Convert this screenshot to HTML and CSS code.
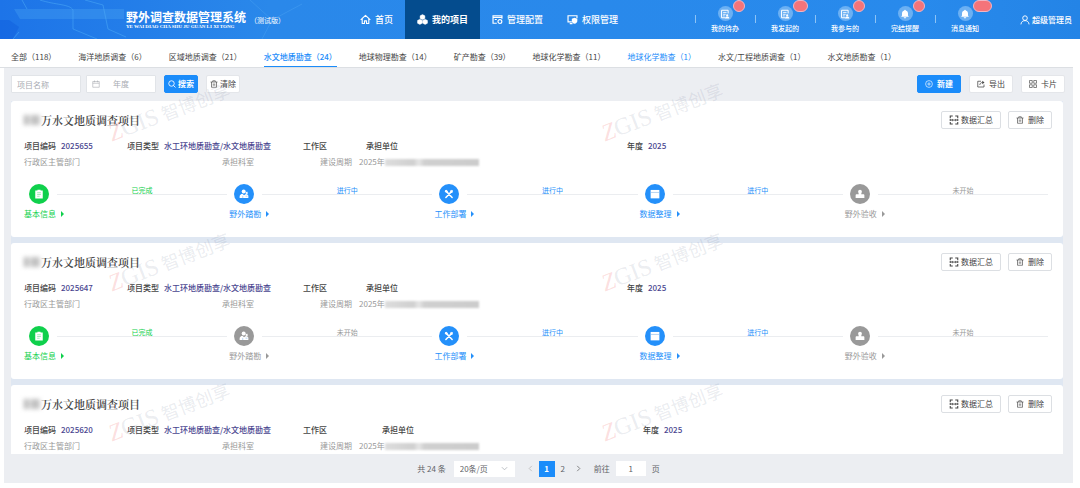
FILE: index.html
```html
<!DOCTYPE html>
<html lang="zh-CN">
<head>
    <meta charset="UTF-8">
    <meta name="viewport" content="width=device-width, initial-scale=1.0">
    <title>野外调查数据管理系统</title>
    <link rel="stylesheet" href="styles.css">
</head>
<body>
    <!-- 图标 -->
    <svg class="sprite" aria-hidden="true">
        <symbol id="i-home" viewBox="0 0 16 16"><path d="M1 8.5 8 2l7 6.5M3.2 7v6.8h3.3V10h3v3.8h3.3V7" fill="none" stroke="currentColor" stroke-width="1.6" stroke-linejoin="round"/></symbol>
        <symbol id="i-cubes" viewBox="0 0 16 16"><path d="M8 .8l3.5 1.8v4L8 8.4 4.5 6.6v-4zM4.2 7.6l3.5 1.8v4L4.2 15.2.7 13.4v-4zM11.8 7.6l3.5 1.8v4l-3.5 1.8-3.5-1.8v-4z" fill="currentColor" stroke="currentColor" stroke-width=".6"/></symbol>
        <symbol id="i-config" viewBox="0 0 16 16"><path d="M7 13.5H1.500v-11h13V7M1.500 5h13" fill="none" stroke="currentColor" stroke-width="1.7"/><circle cx="11.5" cy="11" r="2.8" fill="none" stroke="currentColor" stroke-width="1.7"/><path d="M4 8h3" stroke="currentColor" stroke-width="1.5"/></symbol>
        <symbol id="i-screen" viewBox="0 0 16 16"><path d="M7 11.5H1.500v-9h13V6M4 14h4" fill="none" stroke="currentColor" stroke-width="1.7"/><path d="M11 5.500l4 1.500v3c0 2-1.700 3.300-4 4.300-2.300-1-4-2.300-4-4.300V7z" fill="currentColor"/></symbol>
        <symbol id="i-list" viewBox="0 0 16 16"><path d="M13 7V2H2.500v12H8" fill="none" stroke="currentColor" stroke-width="1.6"/><path d="M5 5.500h5.500M5 8.500h4M5 11h2.500" stroke="currentColor" stroke-width="1.3"/><circle cx="11.5" cy="10" r="1.8" fill="currentColor"/><path d="M8 15c0-4.200 7-4.200 7 0z" fill="currentColor"/></symbol>
        <symbol id="i-bell" viewBox="0 0 16 16"><path d="M8 1c.8 0 1.200.5 1.200 1.200C11.500 2.800 12.800 4.600 12.800 7v3.200l1.400 2H1.800l1.400-2V7c0-2.400 1.300-4.200 3.600-4.800C6.800 1.500 7.200 1 8 1zM6 13h4c0 2.600-4 2.600-4 0z" fill="currentColor"/></symbol>
        <symbol id="i-user" viewBox="0 0 16 16"><circle cx="8" cy="5" r="3.7" fill="none" stroke="currentColor" stroke-width="1.5"/><path d="M1.500 15c.3-4 3-6 6.500-6s6.200 2 6.500 6" fill="none" stroke="currentColor" stroke-width="1.5"/></symbol>
        <symbol id="i-search" viewBox="0 0 16 16"><circle cx="7" cy="7" r="5.500" fill="none" stroke="currentColor" stroke-width="1.7"/><path d="M11 11l4 4" stroke="currentColor" stroke-width="1.7"/></symbol>
        <symbol id="i-trash" viewBox="0 0 16 16"><path d="M1 4h14M5.500 4V1.500h5V4M3 4v10.500h10V4M6.500 7v4.500M9.500 7v4.500" fill="none" stroke="currentColor" stroke-width="1.3"/></symbol>
        <symbol id="i-date" viewBox="0 0 16 16"><path d="M1.500 3h13v11.500h-13zM1.500 6.500h13M5 1v3.500M11 1v3.500" fill="none" stroke="currentColor" stroke-width="1.2"/></symbol>
        <symbol id="i-plus" viewBox="0 0 16 16"><circle cx="8" cy="8" r="6.8" fill="none" stroke="currentColor" stroke-width="1.3"/><path d="M8 4.500v7M4.500 8h7" stroke="currentColor" stroke-width="1.3"/></symbol>
        <symbol id="i-export" viewBox="0 0 16 16"><path d="M8 2.500H1.500V14H14V9" fill="none" stroke="currentColor" stroke-width="1.5"/><path d="M5.500 10c.5-3.500 2.500-5 5.500-5" fill="none" stroke="currentColor" stroke-width="1.5"/><path d="M10.500 1.500 15 5l-4.500 3.500z" fill="currentColor"/></symbol>
        <symbol id="i-grid" viewBox="0 0 16 16"><path d="M1 1h5.500v5.500H1zM9.500 1H15v5.500H9.500zM1 9.500h5.500V15H1zM9.500 9.500H15V15H9.500z" fill="none" stroke="currentColor" stroke-width="1.3"/></symbol>
        <symbol id="i-merge" viewBox="0 0 16 16"><path d="M6 1.500H2V5M2 6.500v3M2 11v3.500h4M10 1.500h4V5M14 6.500v3M14 11v3.500h-4" fill="none" stroke="currentColor" stroke-width="1.7"/><path d="M3 8h3.500M13 8H9.500" stroke="currentColor" stroke-width="1.6"/><path d="M5.500 5.800 8 8l-2.500 2.200zM10.500 5.800 8 8l2.500 2.200z" fill="currentColor"/></symbol>
        <symbol id="i-info" viewBox="0 0 16 16"><path d="M2 2.500h3.500V1h5v1.500H14V15H2z" fill="currentColor"/><path d="M5 6h6M5 8.800h6M5 11.600h4" stroke="#6fdf92" stroke-width="1"/></symbol>
        <symbol id="i-survey" viewBox="0 0 16 16"><circle cx="7.500" cy="4" r="3.2" fill="currentColor"/><path d="M1 14.500V12c0-2.500 2-4 4.500-4.500L8 10l3-2c2.500 0 4 1.500 4 3.500v3z" fill="currentColor"/><path d="M10 6l3-2 1.500 3-3 1z" fill="currentColor"/><path d="M6 11v3.500M10.500 11.500h3" class="cut"/></symbol>
        <symbol id="i-tools" viewBox="0 0 16 16"><path d="M3 3l10 10.500M13 3 3 13.500" stroke="currentColor" stroke-width="2.4" stroke-linecap="round"/><path d="M1 3.500 3.500 1l3 2.500-3 3zM10 2.500 12.500 1 12 3.500l2.500.5L13 6.500l-3-.5z" fill="currentColor"/></symbol>
        <symbol id="i-data" viewBox="0 0 16 16"><path d="M1 1.500h14V15H1z" fill="currentColor"/><path d="M1 5.500h14" class="cut"/></symbol>
        <symbol id="i-stamp" viewBox="0 0 16 16"><path d="M8 1a3 3 0 0 1 3 3c0 1.600-1 2.300-1 4.300h3.500c1 0 1.500.7 1.500 1.700v4.500H1V10c0-1 .5-1.700 1.500-1.700H6C6 6.300 5 5.600 5 4a3 3 0 0 1 3-3z" fill="currentColor"/></symbol>
    </svg>

    <header class="header">
        <svg class="header-art" viewBox="0 0 360 39" preserveAspectRatio="xMinYMid slice" aria-hidden="true">
            <path d="M0 20h9l10 7-6 12H0z" fill="#1262e0" opacity=".6"/>
            <path d="M22 0l5 9M19 32l-6 7M40 0c15 5 30 4 33 10v19l24 10M85 0l18 5 5 24 18 8" fill="none" stroke="#55b4f8" opacity=".45"/>
            <path d="M14 9h110v10H20z" fill="#53adf4" opacity=".3"/>
            <path d="M250 0l22 20-10 19M272 20l30-16" fill="none" stroke="#58b0f5" opacity=".3"/>
        </svg>
        <div class="brand">
            <div class="brand-name">
                <strong>野外调查数据管理系统</strong>
                <span class="pinyin">YE WAI DIAO CHA SHU JU GUAN LI XI TONG</span>
            </div>
            <span class="beta">（测试版）</span>
        </div>
        <nav class="nav">
            <a href="#"><svg><use href="#i-home"/></svg>首页</a>
            <a href="#" class="active"><svg><use href="#i-cubes"/></svg>我的项目</a>
            <a href="#"><svg><use href="#i-config"/></svg>管理配置</a>
            <a href="#"><svg><use href="#i-screen"/></svg>权限管理</a>
        </nav>
        <div class="notices">
            <a href="#"><span class="round"><svg><use href="#i-list"/></svg><i class="badge"></i></span>我的待办</a>
            <a href="#"><span class="round"><svg><use href="#i-list"/></svg><i class="badge mid"></i></span>我发起的</a>
            <a href="#"><span class="round"><svg><use href="#i-list"/></svg><i class="badge"></i></span>我参与的</a>
            <a href="#"><span class="round"><svg><use href="#i-bell"/></svg><i class="badge"></i></span>完结提醒</a>
            <a href="#"><span class="round"><svg><use href="#i-bell"/></svg><i class="badge wide"></i></span>消息通知</a>
        </div>
        <a href="#" class="user"><svg><use href="#i-user"/></svg>超级管理员</a>
    </header>

    <nav class="tabs">
        <a href="#">全部（118）</a>
        <a href="#">海洋地质调查（6）</a>
        <a href="#">区域地质调查（21）</a>
        <a href="#" class="active">水文地质勘查（24）</a>
        <a href="#">地球物理勘查（14）</a>
        <a href="#">矿产勘查（39）</a>
        <a href="#">地球化学勘查（11）</a>
        <a href="#" class="blue">地球化学勘查（1）</a>
        <a href="#">水文/工程地质调查（1）</a>
        <a href="#">水文地质勘查（1）</a>
    </nav>

    <main class="main">
        <form class="toolbar">
            <input type="text" class="field" placeholder="项目名称" aria-label="项目名称">
            <label class="field date"><svg><use href="#i-date"/></svg><input type="text" placeholder="年度" aria-label="年度"></label>
            <button type="button" class="btn primary search"><svg><use href="#i-search"/></svg>搜索</button>
            <button type="button" class="btn clear"><svg><use href="#i-trash"/></svg>清除</button>
            <div class="actions">
                <button type="button" class="btn primary"><svg><use href="#i-plus"/></svg>新建</button>
                <button type="button" class="btn"><svg><use href="#i-export"/></svg>导出</button>
                <button type="button" class="btn"><svg><use href="#i-grid"/></svg>卡片</button>
            </div>
        </form>

        <div class="list">
            <article class="card">
                <div class="card-head">
                    <h2><span class="mask"></span>万水文地质调查项目</h2>
                    <button type="button" class="btn line sum"><svg><use href="#i-merge"/></svg>数据汇总</button>
                    <button type="button" class="btn line"><svg><use href="#i-trash"/></svg>删除</button>
                </div>
                <div class="info">
                    <span>项目编码<b>2025655</b></span>
                    <span>项目类型<b>水工环地质勘查/水文地质勘查</b></span>
                    <span>工作区</span>
                    <span>承担单位</span>
                    <span>年度<b>2025</b></span>
                </div>
                <div class="info sub">
                    <span>行政区主管部门</span>
                    <span>承担科室</span>
                    <span>建设周期</span>
                    <span>2025年<span class="mask long"></span></span>
                </div>
                <div class="steps">
                    <div class="step done">
                        <div class="track"><span class="dot"><svg><use href="#i-info"/></svg></span><span class="state">已完成</span></div>
                        <a href="#">基本信息</a>
                    </div>
                    <div class="step doing">
                        <div class="track"><span class="dot"><svg><use href="#i-survey"/></svg></span><span class="state">进行中</span></div>
                        <a href="#">野外踏勘</a>
                    </div>
                    <div class="step doing">
                        <div class="track"><span class="dot"><svg><use href="#i-tools"/></svg></span><span class="state">进行中</span></div>
                        <a href="#">工作部署</a>
                    </div>
                    <div class="step doing">
                        <div class="track"><span class="dot"><svg><use href="#i-data"/></svg></span><span class="state">进行中</span></div>
                        <a href="#">数据整理</a>
                    </div>
                    <div class="step">
                        <div class="track"><span class="dot"><svg><use href="#i-stamp"/></svg></span><span class="state">未开始</span></div>
                        <a href="#">野外验收</a>
                    </div>
                </div>
            </article>

            <article class="card">
                <div class="card-head">
                    <h2><span class="mask"></span>万水文地质调查项目</h2>
                    <button type="button" class="btn line sum"><svg><use href="#i-merge"/></svg>数据汇总</button>
                    <button type="button" class="btn line"><svg><use href="#i-trash"/></svg>删除</button>
                </div>
                <div class="info">
                    <span>项目编码<b>2025647</b></span>
                    <span>项目类型<b>水工环地质勘查/水文地质勘查</b></span>
                    <span>工作区</span>
                    <span>承担单位</span>
                    <span>年度<b>2025</b></span>
                </div>
                <div class="info sub">
                    <span>行政区主管部门</span>
                    <span>承担科室</span>
                    <span>建设周期</span>
                    <span>2025年<span class="mask long"></span></span>
                </div>
                <div class="steps">
                    <div class="step done">
                        <div class="track"><span class="dot"><svg><use href="#i-info"/></svg></span><span class="state">已完成</span></div>
                        <a href="#">基本信息</a>
                    </div>
                    <div class="step">
                        <div class="track"><span class="dot"><svg><use href="#i-survey"/></svg></span><span class="state">未开始</span></div>
                        <a href="#">野外踏勘</a>
                    </div>
                    <div class="step doing">
                        <div class="track"><span class="dot"><svg><use href="#i-tools"/></svg></span><span class="state">进行中</span></div>
                        <a href="#">工作部署</a>
                    </div>
                    <div class="step doing">
                        <div class="track"><span class="dot"><svg><use href="#i-data"/></svg></span><span class="state">进行中</span></div>
                        <a href="#">数据整理</a>
                    </div>
                    <div class="step">
                        <div class="track"><span class="dot"><svg><use href="#i-stamp"/></svg></span><span class="state">未开始</span></div>
                        <a href="#">野外验收</a>
                    </div>
                </div>
            </article>

            <article class="card">
                <div class="card-head">
                    <h2><span class="mask"></span>万水文地质调查项目</h2>
                    <button type="button" class="btn line sum"><svg><use href="#i-merge"/></svg>数据汇总</button>
                    <button type="button" class="btn line"><svg><use href="#i-trash"/></svg>删除</button>
                </div>
                <div class="info area-wide">
                    <span>项目编码<b>2025620</b></span>
                    <span>项目类型<b>水工环地质勘查/水文地质勘查</b></span>
                    <span>工作区</span>
                    <span>承担单位</span>
                    <span>年度<b>2025</b></span>
                </div>
                <div class="info sub">
                    <span>行政区主管部门</span>
                    <span>承担科室</span>
                    <span>建设周期</span>
                    <span>2025年<span class="mask long"></span></span>
                </div>
            </article>
        </div>

        <div class="pager">
            <span>共 24 条</span>
            <select class="size" aria-label="每页条数"><option>20条/页</option></select>
            <button type="button" class="arrow" disabled aria-label="上一页"><svg viewBox="0 0 8 8"><path d="M5.500 1 2.500 4l3 3"/></svg></button>
            <button type="button" class="page current">1</button>
            <button type="button" class="page">2</button>
            <button type="button" class="arrow" aria-label="下一页"><svg viewBox="0 0 8 8"><path d="M2.500 1l3 3-3 3"/></svg></button>
            <label class="jump">前往<input type="text" value="1">页</label>
        </div>

        <div class="watermarks" aria-hidden="true">
            <div><em><i>Z</i>GIS</em>智博创享</div>
            <div><em><i>Z</i>GIS</em>智博创享</div>
            <div><em><i>Z</i>GIS</em>智博创享</div>
            <div><em><i>Z</i>GIS</em>智博创享</div>
            <div><em><i>Z</i>GIS</em>智博创享</div>
            <div><em><i>Z</i>GIS</em>智博创享</div>
        </div>
    </main>
</body>
</html>
```

FILE: styles.css
```css
* {
    box-sizing: border-box;
}
body {
    margin: 0;
    height: 100vh;
    display: flex;
    flex-direction: column;
    overflow: hidden;
    background: #fff;
    color: #444;
    font-family: "Noto Sans CJK SC", sans-serif;
    font-size: 8px;
    line-height: 12px;
}
a {
    color: inherit;
    text-decoration: none;
}
button, input, select {
    font: inherit;
    color: inherit;
    margin: 0;
}
.sprite {
    position: absolute;
    width: 0;
    height: 0;
}
.cut {
    fill: none;
    stroke: #8cb8e8;
}

/* header */
.header {
    position: relative;
    display: flex;
    height: 39px;
    flex-shrink: 0;
    color: #fff;
    background: linear-gradient(to right, #1d74e8, #2a88ea 25%, #288aec 85%, #2484e6);
}
.header-art {
    position: absolute;
    left: 0;
    top: 0;
    width: 360px;
    height: 39px;
}
.brand {
    position: relative;
    display: flex;
    align-items: center;
    width: 348px;
    padding-left: 126px;
}
.brand-name {
    display: flex;
    flex-direction: column;
    width: 120px;
}
.brand-name strong {
    font-size: 12px;
    line-height: 14px;
}
.pinyin {
    font-family: "Liberation Serif", serif;
    font-size: 5px;
    font-weight: bold;
    line-height: 6px;
    white-space: nowrap;
}
.beta {
    font-size: 7px;
    margin-left: 4px;
}
.nav {
    display: flex;
}
.nav a {
    display: flex;
    align-items: center;
    gap: 4px;
    padding: 0 12px;
    font-size: 9px;
    font-weight: 500;
    white-space: nowrap;
}
.nav svg {
    width: 11px;
    height: 11px;
}
.nav .active {
    background: #044c8e;
    font-weight: bold;
}
.notices {
    display: flex;
    margin-left: auto;
}
.notices a {
    position: relative;
    width: 60px;
    display: flex;
    flex-direction: column;
    align-items: center;
    padding-top: 6px;
    font-size: 7px;
    font-weight: 500;
    line-height: 14px;
}
.notices a::before {
    content: "";
    position: absolute;
    left: 0;
    top: 15px;
    height: 8px;
    border-left: 1px solid #8cc3f6;
}
.round {
    position: relative;
    display: flex;
    align-items: center;
    justify-content: center;
    width: 15px;
    height: 15px;
    border-radius: 50%;
    background: #6bb0f3;
}
.round svg {
    width: 10px;
    height: 10px;
}
.badge {
    position: absolute;
    left: 15px;
    top: -6px;
    width: 12px;
    height: 12px;
    border: 1px solid #f0b6c4;
    border-radius: 6px;
    background: #f4747a;
}
.badge.mid {
    width: 15px;
}
.badge.wide {
    width: 19px;
}
.user {
    display: flex;
    align-items: center;
    gap: 2px;
    margin-left: 25px;
    padding-right: 8px;
    font-weight: 500;
}
.user svg {
    width: 10px;
    height: 10px;
}

/* tabs */
.tabs {
    display: flex;
    gap: 22px;
    flex-shrink: 0;
    height: 29px;
    margin-right: 7px;
    padding: 8px 0 0 11px;
    border-bottom: 1px solid #dcdfe3;
    line-height: 20px;
    white-space: nowrap;
}
.tabs .active {
    color: #1b8cfa;
    font-weight: 500;
    border-bottom: 1px solid #1b8cfa;
}
.tabs .blue {
    color: #1b8cfa;
}

/* content */
.main {
    position: relative;
    flex: 1;
    min-height: 0;
    display: flex;
    flex-direction: column;
    margin: 0 7px 5px 4px;
    overflow: hidden;
    background: #eceef2;
}
.toolbar {
    display: flex;
    gap: 8px;
    padding: 7px 8px 8px 7px;
}
.field {
    width: 70px;
    height: 18px;
    padding: 0 5px;
    border: 1px solid #e1e4e8;
    border-radius: 1px;
    background: #fff;
}
.toolbar .field + .field {
    margin-left: -3px;
}
.date {
    display: flex;
    align-items: center;
    gap: 13px;
    color: #a8abb2;
}
.date svg {
    width: 8px;
    height: 8px;
    flex-shrink: 0;
}
.date input {
    width: 100%;
    min-width: 0;
    padding: 0;
    border: 0;
    background: none;
}
input::placeholder {
    color: #a8abb2;
    opacity: 1;
}
.btn {
    display: flex;
    align-items: center;
    justify-content: center;
    gap: 4px;
    height: 18px;
    padding: 0 7px;
    border: 1px solid #e4e6ea;
    border-radius: 2px;
    background: #fff;
    white-space: nowrap;
}
.btn svg {
    width: 8px;
    height: 8px;
}
.btn.primary {
    border-color: #1b8cfa;
    background: #1b8cfa;
    color: #fff;
    font-weight: bold;
}
.btn.search, .btn.clear {
    gap: 2px;
    padding: 0 3px;
}
.actions {
    display: flex;
    gap: 8px;
    margin-left: auto;
}
.list {
    flex: 1;
    min-height: 0;
    display: flex;
    flex-direction: column;
    gap: 6px;
    margin: 0 10px 0 7px;
    overflow: hidden;
    background: #dfe7f2;
}
.card {
    flex-shrink: 0;
    min-height: 136px;
    padding: 10px 11px 0 13px;
    border-radius: 3px;
    background: #fff;
}
.card-head {
    display: flex;
    align-items: center;
    gap: 7px;
}
.card-head h2 {
    display: flex;
    align-items: center;
    gap: 1px;
    margin: 0 auto 0 0;
    font-family: "Noto Serif CJK SC", "Noto Sans CJK SC", serif;
    font-size: 11px;
    font-weight: 600;
    line-height: 18px;
    color: #444;
}
.btn.line {
    border-color: #dcdfe3;
}
.btn.sum {
    gap: 2px;
}
.btn.sum svg {
    width: 10px;
    height: 10px;
}
.mask {
    display: inline-block;
    width: 16px;
    height: 10px;
    background: linear-gradient(to right, #aaa, #ddd 35%, #bbb 65%, #ccc);
    filter: blur(2px);
}
.mask.long {
    width: 94px;
    height: 7px;
    background: linear-gradient(to right, #ddd, #d0d0d0 30%, #e6e6e6 36%, #d0d0d0 42%, #ccc 95%);
    filter: blur(1px);
    vertical-align: -1px;
}
.info {
    display: grid;
    grid-template-columns: 103px 176px 63px 261px 1fr;
    margin-top: 11px;
    font-weight: 500;
    white-space: nowrap;
}
.info.area-wide {
    grid-template-columns: 103px 176px 79px 261px 1fr;
}
.info b {
    margin-left: 5px;
    font-weight: 500;
    color: #4a4690;
}
.info.sub {
    grid-template-columns: 198px 98px 39px 1fr;
    margin-top: 4px;
    font-weight: normal;
    color: #999;
}

/* steps */
.steps {
    display: flex;
    margin: 16px 2px 0 0;
}
.step {
    flex: 1;
    color: #999;
}
.step.done {
    color: #0fd04c;
}
.step.doing {
    color: #2490fa;
}
.track {
    display: flex;
    align-items: center;
    gap: 8px;
    margin: 0 2px 0 5px;
}
.dot {
    display: flex;
    align-items: center;
    justify-content: center;
    width: 20px;
    height: 20px;
    border-radius: 50%;
    background: currentColor;
}
.dot svg {
    width: 10px;
    height: 10px;
    color: #fff;
}
.state {
    flex: 1;
    height: 20px;
    background: linear-gradient(#ebedf0, #ebedf0) 0 10px / 100% 1px no-repeat;
    font-size: 7px;
    text-align: center;
}
.step a {
    display: flex;
    align-items: center;
    gap: 5px;
    margin-top: 4px;
}
.step a::after {
    content: "";
    border: 3px solid transparent;
    border-left: 3px solid currentColor;
    border-right: 0;
}

/* pagination */
.pager {
    display: flex;
    align-items: center;
    justify-content: center;
    height: 29px;
    flex-shrink: 0;
    color: #606266;
}
.size {
    width: 61px;
    height: 16px;
    margin: 0 8px;
    padding: 0 6px;
    border: 0;
    appearance: none;
    background: #fff url("data:image/svg+xml,%3Csvg xmlns='http://www.w3.org/2000/svg' viewBox='0 0 8 8'%3E%3Cpath d='M1 2.5l3 3 3-3' fill='none' stroke='%23b4b8be'/%3E%3C/svg%3E") right 7px center / 7px 7px no-repeat;
}
.page, .arrow {
    width: 16px;
    height: 16px;
    padding: 0;
    border: 0;
    background: none;
}
.page.current {
    background: #1b8cfa;
    color: #fff;
    font-weight: bold;
}
.arrow svg {
    display: block;
    width: 7px;
    height: 7px;
    margin: 0 auto;
    fill: none;
    stroke: #777;
}
.arrow:disabled svg {
    stroke: #bbb;
}
.jump {
    display: flex;
    align-items: center;
    gap: 6px;
    margin-left: 7px;
}
.jump input {
    width: 30px;
    height: 15px;
    padding: 0;
    border: 0;
    background: #fff;
    text-align: center;
}

/* watermark laid over the whole list */
.watermarks {
    position: absolute;
    left: 100px;
    top: 30px;
    display: grid;
    grid-template-columns: repeat(2, 493px);
    grid-auto-rows: 150px;
    pointer-events: none;
    color: rgba(110, 120, 150, 0.15);
    font-size: 18px;
    line-height: 26px;
}
.watermarks div {
    display: flex;
    align-items: center;
    justify-content: center;
    gap: 4px;
    width: 130px;
    height: 26px;
    transform: rotate(-21deg);
}
.watermarks em {
    font-family: "Liberation Serif", serif;
    font-size: 24px;
    font-style: normal;
}
.watermarks i {
    color: rgba(240, 90, 90, 0.2);
}
```
